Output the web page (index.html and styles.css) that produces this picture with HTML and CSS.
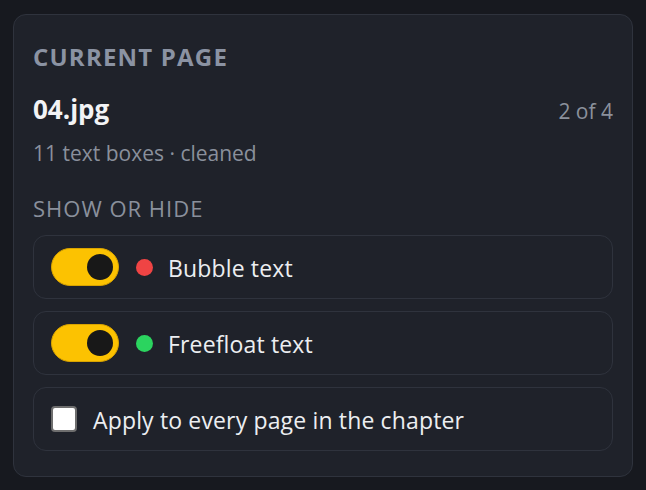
FILE: index.html
```html
<!DOCTYPE html>
<html lang="en">
<head>
<meta charset="utf-8">
<title>Current page</title>
<link rel="stylesheet" href="styles.css">
</head>
<body>
<section class="card">
  <h2 class="title">CURRENT PAGE</h2>
  <div class="name-row">
    <span class="name">04.jpg</span>
    <span class="count">2 of 4</span>
  </div>
  <p class="meta">11 text boxes · cleaned</p>
  <h3 class="label">SHOW OR HIDE</h3>
  <div class="rows">
    <label class="row">
      <span class="toggle on"><span class="knob"></span></span>
      <span class="dot red"></span>
      <span class="row-text">Bubble text</span>
    </label>
    <label class="row">
      <span class="toggle on"><span class="knob"></span></span>
      <span class="dot green"></span>
      <span class="row-text">Freefloat text</span>
    </label>
    <label class="row">
      <span class="check"></span>
      <span class="row-text">Apply to every page in the chapter</span>
    </label>
  </div>
</section>
</body>
</html>
```
FILE: styles.css
```css
* { box-sizing: border-box; }
html, body { margin: 0; }
body {
  background: #17191f;
  padding: 14px 13px 0 13px;
  font-family: "Open Sans", "Noto Sans", sans-serif;
  height: 490px;
}
.card {
  width: 620px;
  height: 463px;
  background: #1f222a;
  border: 1px solid #2f333d;
  border-radius: 13px;
  padding: 27px 19px 25px 19px;
}
.title {
  margin: 0;
  font-size: 24px;
  line-height: 30px;
  font-weight: 700;
  letter-spacing: 1.2px;
  color: #8b93a3;
}
.name-row {
  margin-top: 20px;
  display: flex;
  justify-content: space-between;
  align-items: baseline;
  height: 34px;
  line-height: 34px;
}
.name {
  font-size: 26px;
  font-weight: 700;
  color: #f2f3f5;
}
.count {
  font-size: 21px;
  color: #8b919c;
}
.meta {
  margin: 13px 0 0 0;
  font-size: 21px;
  line-height: 28px;
  color: #8a909c;
}
.label {
  margin: 27px 0 0 0;
  font-size: 22px;
  line-height: 28px;
  font-weight: 400;
  letter-spacing: 1px;
  color: #8a909c;
}
.rows {
  margin-top: 13px;
  display: flex;
  flex-direction: column;
  gap: 12px;
}
.row {
  height: 64px;
  display: flex;
  align-items: center;
  padding: 0 17px;
  border: 1px solid #2f333d;
  border-radius: 13px;
  background: #1f222a;
}
.toggle {
  width: 68px;
  height: 38px;
  border-radius: 19px;
  background: #fcc201;
  border: 1px solid #d9a300;
  display: flex;
  align-items: center;
  justify-content: flex-end;
  padding-right: 5px;
  flex: none;
}
.knob {
  width: 26px;
  height: 26px;
  border-radius: 50%;
  background: #181818;
}
.dot {
  width: 17px;
  height: 17px;
  border-radius: 50%;
  margin-left: 17px;
  flex: none;
}
.dot.red { background: #ef4444; }
.dot.green { background: #2bd45f; }
.row-text {
  margin-left: 15px;
  padding-top: 2px;
  font-size: 23px;
  letter-spacing: 0.15px;
  color: #eceef1;
}
.check {
  width: 26px;
  height: 26px;
  border-radius: 4px;
  background: #ffffff;
  border: 2px solid #6e6e6e;
  flex: none;
}
.check + .row-text { margin-left: 16px; }
```
